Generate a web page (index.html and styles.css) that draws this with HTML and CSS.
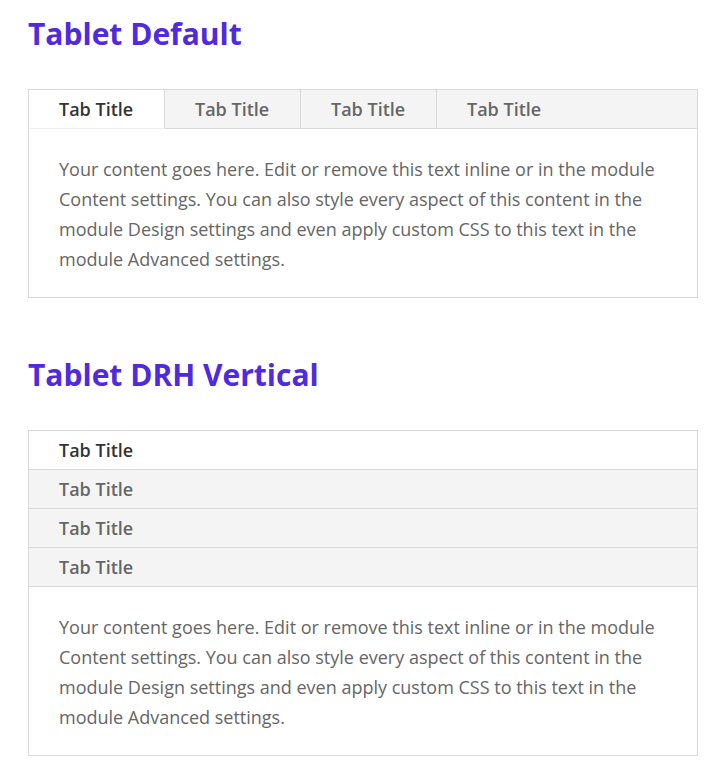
FILE: index.html
```html
<!DOCTYPE html>
<html>
<head>
    <meta charset="utf-8">
    <title>Tabs</title>
    <link rel="stylesheet" href="styles.css">
</head>
<body>
    <div id="container">
        <div class="section">
            <h2 class="sec_title">Tablet Default</h2>
            <div class="tabs">
                <ul class="tab_ctrl">
                    <li class="active">Tab Title</li>
                    <li>Tab Title</li>
                    <li>Tab Title</li>
                    <li>Tab Title</li>
                </ul>
                <div class="tab_body">
                    <p>Your content goes here. Edit or remove this text inline or in the module Content settings. You can also style every aspect of this content in the module Design settings and even apply custom CSS to this text in the module Advanced settings.</p>
                </div>
            </div>
        </div>
        <div class="section">
            <h2 class="sec_title">Tablet DRH Vertical</h2>
            <div class="tabs vert">
                <ul class="tab_ctrl">
                    <li class="active">Tab Title</li>
                    <li>Tab Title</li>
                    <li>Tab Title</li>
                    <li>Tab Title</li>
                </ul>
                <div class="tab_body">
                    <p>Your content goes here. Edit or remove this text inline or in the module Content settings. You can also style every aspect of this content in the module Design settings and even apply custom CSS to this text in the module Advanced settings.</p>
                </div>
            </div>
        </div>
    </div>
</body>
</html>
```
FILE: styles.css
```css
* {
    padding: 0px;
    margin: 0px;
    box-sizing: border-box;
}
body {
    background-color: #fff;
    font-family: "Open Sans", "Liberation Sans", sans-serif;
}
#container {
    width: 698px;
    padding: 16px 0px 0px 28px;
}
.section {
    margin-bottom: 59px;
}
.sec_title {
    font-size: 30px;
    line-height: 36px;
    font-weight: 700;
    color: #4f2ae0;
    margin-bottom: 37px;
}
.tabs {
    border: 1px solid #d9d9d9;
}
.tab_ctrl {
    list-style: none;
    display: flex;
    background-color: #f4f4f4;
    border-bottom: 1px solid #d9d9d9;
}
.tab_ctrl li {
    width: 136px;
    height: 38px;
    line-height: 38px;
    padding: 0px 30px;
    font-size: 18px;
    font-weight: 600;
    color: #666;
    border-right: 1px solid #d9d9d9;
}
.tab_ctrl li:last-child {
    border-right: none;
}
.tab_ctrl li.active {
    background-color: #fff;
    color: #333;
    height: 39px;
    margin-bottom: -1px;
    border-bottom: 1px solid #f0f0f0;
}
.tab_body {
    padding: 25px 30px 23px 30px;
}
.tab_body p {
    font-size: 18px;
    line-height: 30px;
    color: #666;
}
/* vertical variant: tabs stacked as rows */
.vert .tab_ctrl {
    flex-direction: column;
    border-bottom: none;
}
.vert .tab_ctrl li,
.vert .tab_ctrl li.active {
    width: auto;
    height: 39px;
    margin-bottom: 0px;
    border-right: none;
    border-bottom: 1px solid #d9d9d9;
}
```
